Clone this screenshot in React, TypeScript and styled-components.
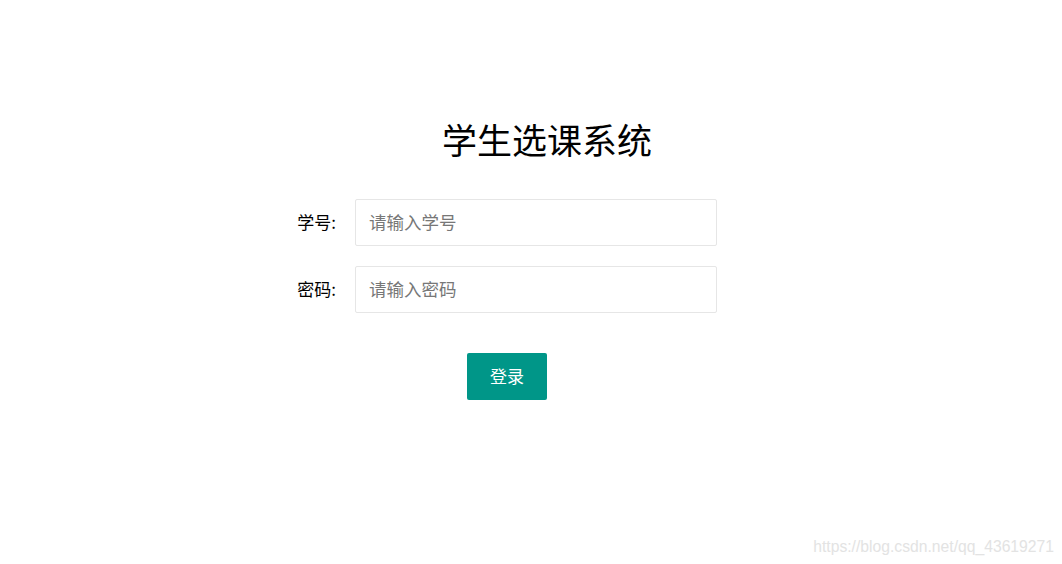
import styled, { createGlobalStyle } from 'styled-components'

const GlobalStyle = createGlobalStyle`
  html, body {
    margin: 0;
    padding: 0;
    background: #fff;
  }
  body {
    font-family: "Noto Sans CJK SC", "Liberation Sans", sans-serif;
  }
`

const Page = styled.div`
  position: relative;
  width: 1062px;
  height: 564px;
  padding-top: 118px;
  box-sizing: border-box;
  overflow: hidden;
`

const Panel = styled.form`
  display: flex;
  flex-direction: column;
  margin-left: 280px;
  width: 440px;
`

const Title = styled.h1`
  margin: 0 0 39px 162px;
  font-size: 35px;
  line-height: 42px;
  font-weight: 400;
  color: #000;
`

const Row = styled.div`
  display: flex;
  align-items: center;
  margin-bottom: 20px;
`

const Label = styled.label`
  width: 75px;
  padding: 0 19px 3px 0;
  box-sizing: border-box;
  text-align: right;
  font-size: 17px;
  color: #000;
`

const Input = styled.input`
  width: 362px;
  height: 47px;
  box-sizing: border-box;
  padding: 0 13px 3px;
  border: 1px solid #e6e6e6;
  border-radius: 2px;
  font-family: inherit;
  font-size: 17.5px;
  color: #333;
  outline: none;
  &::placeholder {
    color: #777;
  }
`

const Submit = styled.button`
  margin: 20px 0 0 187px;
  padding: 0 0 3px;
  width: 80px;
  height: 47px;
  border: none;
  border-radius: 2px;
  background: #009688;
  color: #fff;
  font-family: inherit;
  font-size: 17px;
  cursor: pointer;
`

const Watermark = styled.div`
  position: absolute;
  right: 8px;
  bottom: 8px;
  font-family: "Liberation Sans", Arial, sans-serif;
  font-size: 15.7px;
  color: #e3e3e3;
`

export default function App() {
  return (
    <>
      <GlobalStyle />
      <Page>
        <Panel onSubmit={(e) => e.preventDefault()}>
          <Title>学生选课系统</Title>
          <Row>
            <Label>学号:</Label>
            <Input type="text" placeholder="请输入学号" />
          </Row>
          <Row>
            <Label>密码:</Label>
            <Input type="password" placeholder="请输入密码" />
          </Row>
          <div>
            <Submit type="submit">登录</Submit>
          </div>
        </Panel>
        <Watermark>https://blog.csdn.net/qq_43619271</Watermark>
      </Page>
    </>
  )
}
